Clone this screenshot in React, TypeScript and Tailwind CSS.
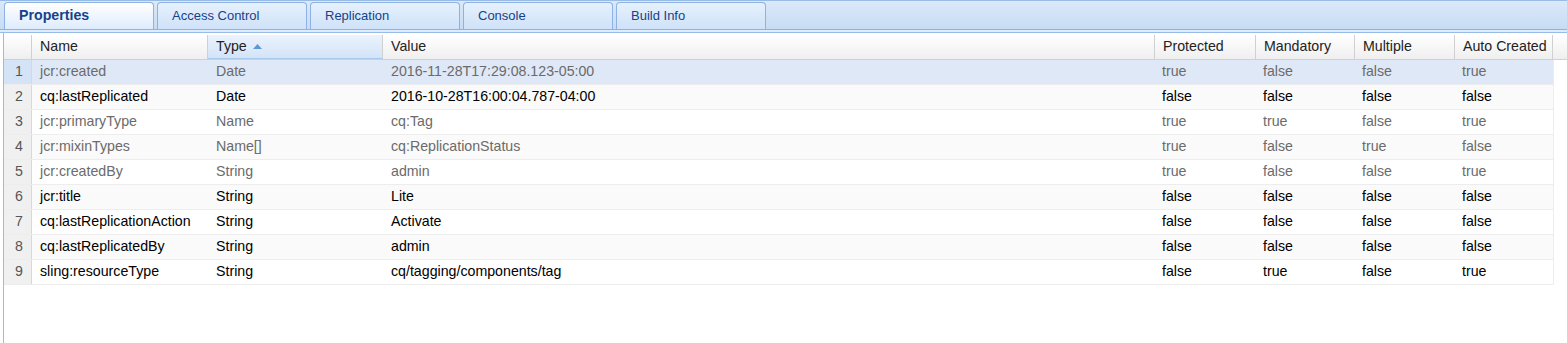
import type { ReactNode } from "react";

type Row = {
	name: string;
	type: string;
	value: string;
	flags: [boolean, boolean, boolean, boolean];
};

const rows: Row[] = [
	{ name: "jcr:created", type: "Date", value: "2016-11-28T17:29:08.123-05:00", flags: [true, false, false, true] },
	{ name: "cq:lastReplicated", type: "Date", value: "2016-10-28T16:00:04.787-04:00", flags: [false, false, false, false] },
	{ name: "jcr:primaryType", type: "Name", value: "cq:Tag", flags: [true, true, false, true] },
	{ name: "jcr:mixinTypes", type: "Name[]", value: "cq:ReplicationStatus", flags: [true, false, true, false] },
	{ name: "jcr:createdBy", type: "String", value: "admin", flags: [true, false, false, true] },
	{ name: "jcr:title", type: "String", value: "Lite", flags: [false, false, false, false] },
	{ name: "cq:lastReplicationAction", type: "String", value: "Activate", flags: [false, false, false, false] },
	{ name: "cq:lastReplicatedBy", type: "String", value: "admin", flags: [false, false, false, false] },
	{ name: "sling:resourceType", type: "String", value: "cq/tagging/components/tag", flags: [false, true, false, true] },
];

const tabs = ["Properties", "Access Control", "Replication", "Console", "Build Info"];

function HeaderCell({ width, sorted, children }: { width: string; sorted?: boolean; children?: ReactNode }) {
	return (
		<div
			className={`${width} h-full flex items-center gap-1.5 pl-2 border-r border-[#d0d0d0] ${
				sorted ? "bg-gradient-to-b from-[#ebf3fd] to-[#d3e4f8] border-b border-b-[#a8c8eb]" : ""
			}`}
		>
			{children}
		</div>
	);
}

export default function App() {
	return (
		<div className="w-[1567px] h-[343px] bg-white overflow-hidden flex flex-col font-['Liberation_Sans',Arial,sans-serif] text-[14.2px]">
			{/* tab strip */}
			<div className="h-[30px] shrink-0 flex items-end gap-[3px] pl-1 border-t border-[#99bbe8] border-b border-b-[#8db2e3] bg-gradient-to-b from-[#dbe9f9] to-[#c7dcf4]">
				{tabs.map((t, i) => (
					<div
						key={t}
						className={`w-[150px] h-[27px] rounded-t-[4px] border border-b-0 border-[#8db2e3] flex items-center pl-[14px] text-[#15428b] ${
							i === 0
								? "bg-gradient-to-b from-white to-[#deecfd] font-bold text-[14.2px]"
								: "bg-gradient-to-b from-[#e6f1fd] to-[#cfe2f8] text-[13px]"
						}`}
					>
						{t}
					</div>
				))}
			</div>
			<div className="h-[2px] shrink-0 bg-[#deecfd] border-b border-[#99bbe8] box-content" />

			{/* grid body */}
			<div className="flex-1 ml-[3px] border-l border-[#99bbe8] pt-[2px]">
				<div className="h-[25px] flex text-[#222] bg-gradient-to-b from-white to-[#efefef] border-b border-[#d0d0d0]">
					<HeaderCell width="w-[28px]" />
					<HeaderCell width="w-[176px]">Name</HeaderCell>
					<HeaderCell width="w-[175px]" sorted>
						Type
						<svg width="9" height="5" viewBox="0 0 9 5" className="mt-[-1px]">
							<path d="M0 5 L4.5 0 L9 5 Z" fill="#5b9ad9" />
						</svg>
					</HeaderCell>
					<HeaderCell width="w-[772px]">Value</HeaderCell>
					<HeaderCell width="w-[101px]">Protected</HeaderCell>
					<HeaderCell width="w-[99px]">Mandatory</HeaderCell>
					<HeaderCell width="w-[100px]">Multiple</HeaderCell>
					<HeaderCell width="w-[98px]">Auto Created</HeaderCell>
					<div className="flex-1" />
				</div>

				{rows.map((r, i) => {
					const selected = i === 0;
					const muted = r.flags[0];
					const bg = selected ? "bg-[#dfe8f6]" : i % 2 === 1 ? "bg-[#fafafa]" : "bg-white";
					return (
						<div
							key={r.name}
							className={`w-[1550px] h-[25px] flex items-center border-b border-r border-[#ededed] ${bg} ${
								muted ? "text-[#6b6b6b]" : "text-black"
							}`}
						>
							<div
								className={`w-[28px] h-full flex items-center justify-end pr-2 text-[#555] border-r border-[#d8d8d8] ${
									selected ? "bg-[#d4e3f6]" : "bg-[#f0f0f0]"
								}`}
							>
								{i + 1}
							</div>
							<div className="w-[176px] pl-2">{r.name}</div>
							<div className="w-[175px] pl-2">{r.type}</div>
							<div className="w-[772px] pl-2">{r.value}</div>
							<div className="w-[101px] pl-[7px]">{String(r.flags[0])}</div>
							<div className="w-[99px] pl-[7px]">{String(r.flags[1])}</div>
							<div className="w-[100px] pl-[7px]">{String(r.flags[2])}</div>
							<div className="w-[98px] pl-[7px]">{String(r.flags[3])}</div>
						</div>
					);
				})}
			</div>
		</div>
	);
}
